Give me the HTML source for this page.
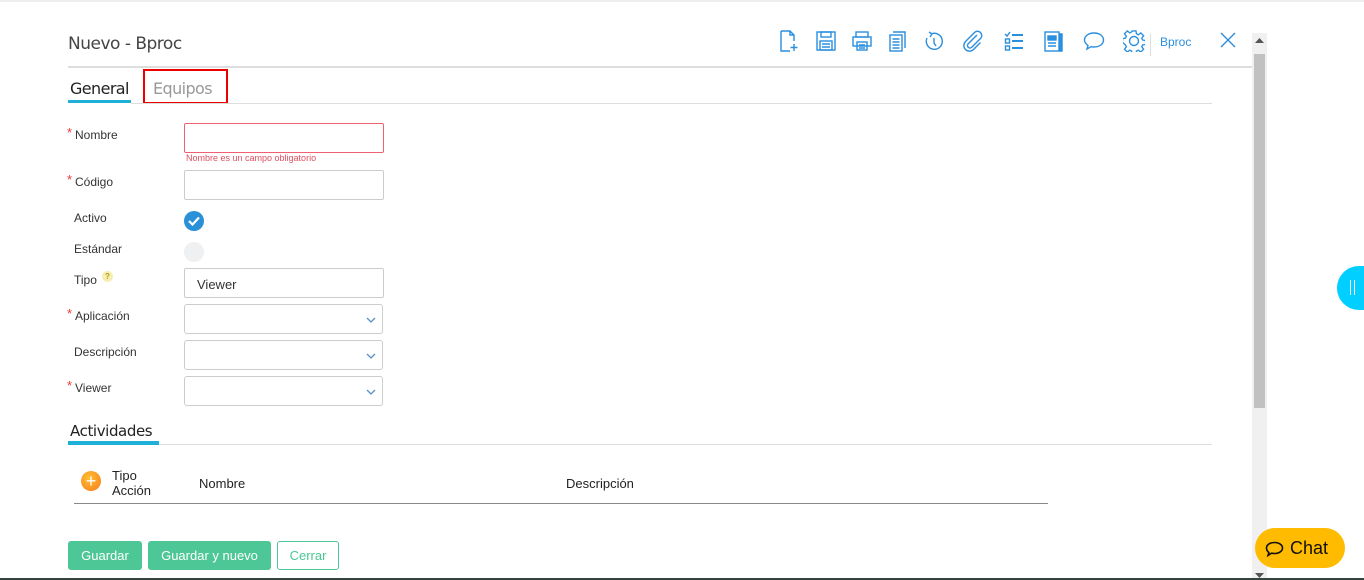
<!DOCTYPE html>
<html><head><meta charset="utf-8"><style>
*{margin:0;padding:0;box-sizing:border-box}
body{width:1364px;height:580px;background:#fff;position:relative;overflow:hidden;font-family:"Liberation Sans",sans-serif;color:#333}
.a{position:absolute}
.lbl{position:absolute;font-size:12px;color:#333;left:74px}
.star{position:absolute;left:67px;color:#e33;font-size:13px;line-height:13px}
.inp{position:absolute;left:184px;width:200px;height:30px;border:1px solid #ccc;border-radius:2px;background:#fff}
.sel{position:absolute;left:184px;width:199px;height:30px;border:1px solid #ccc;border-radius:3px}
.sel svg{position:absolute;right:6px;top:11px}
.ic{position:absolute;top:30px}
.btn{position:absolute;top:541px;height:29px;border-radius:3px;font-size:13px;line-height:29px;text-align:center}
</style></head><body>
<div class="a" style="left:0;top:0;width:1364px;height:2px;background:#eee"></div>
<div class="a" style="left:68px;top:34px;font-size:17px;color:#444;font-family:'DejaVu Sans',sans-serif;letter-spacing:-0.5px">Nuevo - Bproc</div>
<svg class="ic" style="left:778px" width="22" height="22" viewBox="0 0 22 22" fill="none" stroke="#2b8fde" stroke-width="1.4"><path d="M3 1h9l4 4v6M3 1v20h9M12 1v4h4M16 14v7M12.5 17.5h7"/></svg>
<svg class="ic" style="left:816px" width="20" height="22" viewBox="0 0 20 22" fill="none" stroke="#2b8fde" stroke-width="1.4"><rect x="1" y="2" width="18" height="18"/><rect x="5" y="2" width="10" height="5"/><rect x="4" y="11" width="12" height="9"/><path d="M6 14h8M6 17h8"/></svg>
<svg class="ic" style="left:852px" width="20" height="22" viewBox="0 0 20 22" fill="none" stroke="#2b8fde" stroke-width="1.4"><rect x="4" y="2" width="12" height="5"/><rect x="1" y="7" width="18" height="9"/><rect x="5" y="12" width="10" height="8"/><path d="M7 15h6M7 18h6"/></svg>
<svg class="ic" style="left:888px" width="20" height="22" viewBox="0 0 20 22" fill="none" stroke="#2b8fde" stroke-width="1.4"><path d="M5 2h12v16"/><rect x="2" y="5" width="12" height="16"/><path d="M4.5 9h7M4.5 12h7M4.5 15h7M4.5 18h7"/></svg>
<svg class="ic" style="left:924px" width="20" height="22" viewBox="0 0 20 22" fill="none" stroke="#2b8fde" stroke-width="1.4"><path d="M7 4a8 8 0 1 1-4 4"/><path d="M5 2l3 2-2 3" /><path d="M10 8v5l2 3"/></svg>
<svg class="ic" style="left:962px" width="22" height="22" viewBox="0 0 22 22" fill="none" stroke="#2b8fde" stroke-width="1.4"><path d="M15 5l-9 9a2.5 2.5 0 0 0 3.5 3.5l9-9a4 4 0 0 0-6-6l-9 9a5.5 5.5 0 0 0 8 8l7-7"/></svg>
<svg class="ic" style="left:1004px" width="20" height="22" viewBox="0 0 20 22" fill="none" stroke="#2b8fde" stroke-width="1.4"><path d="M1 4l2 2 3-4"/><rect x="1.5" y="9" width="4" height="4"/><rect x="1.5" y="16" width="4" height="4"/><path d="M8 5h11M8 11h11M8 18h11" stroke-width="2"/></svg>
<svg class="ic" style="left:1044px" width="20" height="22" viewBox="0 0 20 22" fill="none" stroke="#2b8fde" stroke-width="1.4"><rect x="1" y="2" width="14" height="19"/><path d="M15 4h3v17h-3" fill="#2b8fde"/><rect x="4" y="6" width="8" height="4" fill="#2b8fde"/><path d="M4 13h8M4 16h8"/></svg>
<svg class="ic" style="left:1083px" width="22" height="22" viewBox="0 0 22 22" fill="none" stroke="#2b8fde" stroke-width="1.4"><path d="M11 3c5.5 0 9.5 3 9.5 7s-4 7-9.5 7c-1 0-2 0-3-.3L4 19l1-3.5C3 14 1.5 12 1.5 10c0-4 4-7 9.5-7z"/></svg>
<svg class="ic" style="left:1123px" width="22" height="22" viewBox="0 0 22 22" fill="none" stroke="#2b8fde" stroke-width="1.4"><path d="M9 1h4l.5 3 2 1 2.5-2 3 3-2 2.5 1 2 3 .5v4l-3 .5-1 2 2 2.5-3 3-2.5-2-2 1-.5 3H9l-.5-3-2-1-2.5 2-3-3 2-2.5-1-2L-1 13V9l3-.5 1-2-2-2.5 3-3 2.5 2 2-1z" transform="translate(0.5 0) scale(0.96)"/><circle cx="11" cy="11" r="4.5"/></svg>
<div class="a" style="left:1150px;top:34px;width:1px;height:22px;background:#ddd"></div>
<div class="a" style="left:1160px;top:35px;font-size:12px;color:#2b8fde">Bproc</div>
<svg class="a" style="left:1219px;top:31px" width="18" height="18" viewBox="0 0 18 18" stroke="#2b8fde" stroke-width="1.4"><path d="M2 2l14 14M16 2L2 16"/></svg>
<div class="a" style="left:68px;top:66px;width:1184px;height:2px;background:#ddd"></div>
<div class="a" style="left:70px;top:79px;font-size:16px;color:#222;font-family:'DejaVu Sans',sans-serif;letter-spacing:-0.6px">General</div>
<div class="a" style="left:68px;top:100px;width:63px;height:3px;background:#1eb0d6"></div>
<div class="a" style="left:143px;top:69px;width:85px;height:35px;border:2px solid #e00"></div>
<div class="a" style="left:153px;top:79px;font-size:16px;color:#999;font-family:'DejaVu Sans',sans-serif;letter-spacing:-0.6px">Equipos</div>
<div class="a" style="left:131px;top:103px;width:1081px;height:1px;background:#ddd"></div>
<span class="star" style="top:126px">*</span><div class="lbl" style="top:128px;left:75px">Nombre</div>
<div class="inp" style="top:123px;border-color:#f06070"></div>
<div class="a" style="left:186px;top:153px;font-size:9px;color:#e05060">Nombre es un campo obligatorio</div>
<span class="star" style="top:173px">*</span><div class="lbl" style="top:175px;left:75px">Código</div>
<div class="inp" style="top:170px"></div>
<div class="lbl" style="top:211px">Activo</div>
<div class="a" style="left:184px;top:211px;width:20px;height:20px;border-radius:50%;background:#2a90d8"><svg width="20" height="20" viewBox="0 0 20 20"><path d="M5 10l3.5 3.5L15 6.5" stroke="#fff" stroke-width="2.2" fill="none"/></svg></div>
<div class="lbl" style="top:242px">Estándar</div>
<div class="a" style="left:184px;top:242px;width:20px;height:20px;border-radius:50%;background:#eef0f2"></div>
<div class="lbl" style="top:273px">Tipo</div>
<div class="a" style="left:102px;top:271px;width:11px;height:11px;border-radius:50%;background:#f6eeb0;font-size:8px;color:#b09a20;text-align:center;line-height:11px;font-weight:bold">?</div>
<div class="inp" style="top:268px"><span style="position:absolute;left:12px;top:8px;font-size:13px">Viewer</span></div>
<span class="star" style="top:307px">*</span><div class="lbl" style="top:309px;left:75px">Aplicación</div>
<div class="sel" style="top:304px"><svg width="10" height="8"><path d="M1 2l4 4 4-4" stroke="#5a8fc8" stroke-width="1.3" fill="none"/></svg></div>
<div class="lbl" style="top:345px">Descripción</div>
<div class="sel" style="top:340px"><svg width="10" height="8"><path d="M1 2l4 4 4-4" stroke="#5a8fc8" stroke-width="1.3" fill="none"/></svg></div>
<span class="star" style="top:379px">*</span><div class="lbl" style="top:381px;left:75px">Viewer</div>
<div class="sel" style="top:376px"><svg width="10" height="8"><path d="M1 2l4 4 4-4" stroke="#5a8fc8" stroke-width="1.3" fill="none"/></svg></div>
<div class="a" style="left:70px;top:422px;font-size:15px;color:#222;font-family:'DejaVu Sans',sans-serif;letter-spacing:-0.4px">Actividades</div>
<div class="a" style="left:68px;top:441px;width:91px;height:4px;background:#1eb0d6"></div>
<div class="a" style="left:159px;top:444px;width:1053px;height:1px;background:#ddd"></div>
<div class="a" style="left:81px;top:471px;width:20px;height:20px;border-radius:50%;background:radial-gradient(circle at 40% 35%,#ffc030,#f57a20);color:#fff;text-align:center;line-height:20px;font-size:18px">+</div>
<div class="a" style="left:112px;top:468px;font-size:13px;line-height:15px;color:#222">Tipo<br>Acción</div>
<div class="a" style="left:199px;top:476px;font-size:13px;color:#222">Nombre</div>
<div class="a" style="left:566px;top:476px;font-size:13px;color:#222">Descripción</div>
<div class="a" style="left:74px;top:503px;width:974px;height:1px;background:#888"></div>
<div class="btn" style="left:68px;width:74px;background:#4cc795;color:#fff">Guardar</div>
<div class="btn" style="left:148px;width:123px;background:#4cc795;color:#fff">Guardar y nuevo</div>
<div class="btn" style="left:277px;width:62px;border:1px solid #4cc795;color:#4cc795;line-height:27px">Cerrar</div>
<div class="a" style="left:0;top:578px;width:1364px;height:2px;background:#33443f"></div>
<div class="a" style="left:1252px;top:33px;width:15px;height:545px;background:#f0f0f0"></div>
<div class="a" style="left:1254px;top:54px;width:11px;height:354px;background:#c1c1c1"></div>
<svg class="a" style="left:1255px;top:38px" width="9" height="6"><path d="M0 5L4.5 0 9 5z" fill="#555"/></svg>
<svg class="a" style="left:1255px;top:573px" width="9" height="5"><path d="M0 0L4.5 5 9 0z" fill="#555"/></svg>
<div class="a" style="left:1337px;top:266px;width:50px;height:44px;border-radius:22px;background:#00cfff"><div style="position:absolute;left:13px;top:14px;width:5px;height:15px;border-left:1px solid #fff;border-right:1px solid #fff"></div></div>
<div class="a" style="left:1255px;top:528px;width:90px;height:40px;border-radius:20px;background:#ffbb00;color:#111;font-size:18px;line-height:40px"><svg style="position:absolute;left:10px;top:13px" width="19" height="16" viewBox="0 0 19 16" fill="none" stroke="#111" stroke-width="1.6"><path d="M9.5 1.5c4.5 0 8 2.4 8 5.5s-3.5 5.5-8 5.5c-1 0-2-.1-2.8-.4L3 14.5l.9-3C2.4 10.4 1.5 8.8 1.5 7c0-3.1 3.5-5.5 8-5.5z"/></svg><span style="position:absolute;left:35px">Chat</span></div>
</body></html>
